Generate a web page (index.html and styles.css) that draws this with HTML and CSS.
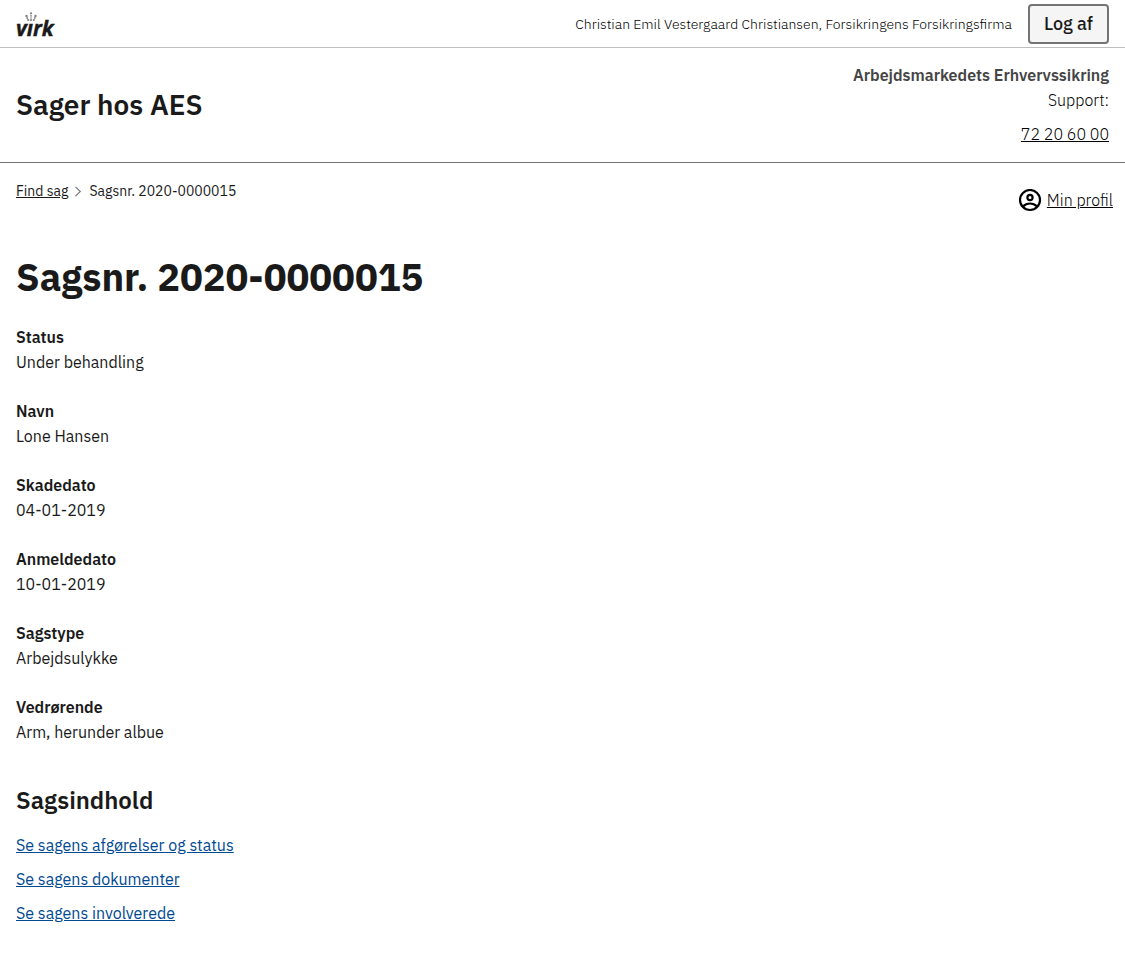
FILE: index.html
```html
<!DOCTYPE html>
<html lang="da">
<head>
<meta charset="utf-8">
<meta name="viewport" content="width=device-width, initial-scale=1">
<title>Sagsnr. 2020-0000015</title>
<link rel="stylesheet" href="styles.css">
</head>
<body>
<header>
  <div class="portal-bar">
    <a class="logo" href="#" aria-label="virk">
      <svg width="48" height="40" viewBox="0 0 48 40" aria-hidden="true">
        <g fill="#808080">
          <circle cx="15" cy="9.300" r="1.100"/><circle cx="15" cy="11.800" r=".9"/><circle cx="15" cy="14" r=".8"/><circle cx="15" cy="16" r="1.100"/>
          <circle cx="10.500" cy="12" r="1.200"/><circle cx="11.200" cy="14" r=".9"/><circle cx="12.200" cy="16" r="1.100"/>
          <circle cx="19.500" cy="12" r="1.200"/><circle cx="18.800" cy="14" r=".9"/><circle cx="17.800" cy="16" r="1.100"/>
        </g>
        <text class="logo-text" x="0" y="32">vırk</text>
      </svg>
    </a>
    <p class="user">Christian Emil Vestergaard Christiansen, Forsikringens Forsikringsfirma</p>
    <button class="logout" type="button">Log af</button>
  </div>
  <div class="solution-bar">
    <p class="solution-title">Sager hos AES</p>
    <div class="authority">
      <p class="authority-name">Arbejdsmarkedets Erhvervssikring</p>
      <p>Support:</p>
      <p class="phone"><a href="tel:72206000">72 20 60 00</a></p>
    </div>
  </div>
</header>
<div class="page-nav">
  <nav class="breadcrumbs" aria-label="Brødkrumme">
    <a href="#">Find sag</a>
    <svg width="7" height="11" viewBox="0 0 7 11" fill="none" stroke="#747474" stroke-width="1.100" aria-hidden="true"><path d="M.5 .8l4.800 4.700L.5 10.200"/></svg>
    <span>Sagsnr. 2020-0000015</span>
  </nav>
  <a class="profile" href="#">
    <svg width="24" height="24" viewBox="0 0 24 24" fill="none" stroke="#000" stroke-width="2.200" aria-hidden="true"><circle cx="12" cy="11" r="10"/><circle cx="12" cy="8.500" r="2.600"/><path d="M5 17.500c2-2 4.200-3 7-3s5 1 7 3"/></svg>
    <span>Min profil</span>
  </a>
</div>
<main>
  <h1>Sagsnr. 2020-0000015</h1>
  <dl class="facts">
    <div><dt>Status</dt><dd>Under behandling</dd></div>
    <div><dt>Navn</dt><dd>Lone Hansen</dd></div>
    <div><dt>Skadedato</dt><dd>04-01-2019</dd></div>
    <div><dt>Anmeldedato</dt><dd>10-01-2019</dd></div>
    <div><dt>Sagstype</dt><dd>Arbejdsulykke</dd></div>
    <div><dt>Vedrørende</dt><dd>Arm, herunder albue</dd></div>
  </dl>
  <h2>Sagsindhold</h2>
  <ul class="links">
    <li><a href="#">Se sagens afgørelser og status</a></li>
    <li><a href="#">Se sagens dokumenter</a></li>
    <li><a href="#">Se sagens involverede</a></li>
  </ul>
</main>
</body>
</html>
```
FILE: styles.css
```css
* { box-sizing: border-box; }
body {
  margin: 0;
  background: #fff;
  color: #1a1a1a;
  font: 400 16px/25px "IBM Plex Sans", "Noto Sans", sans-serif;
}
p, h1, h2, dl, dd, ul { margin: 0; }
a { color: inherit; text-underline-offset: 1px; }

.portal-bar {
  display: flex;
  align-items: center;
  gap: 16px;
  padding: 4px 16px 3px;
  border-bottom: 1px solid #bfbfbf;
}
.logo { display: flex; margin-right: auto; }
.logo svg { overflow: visible; }
.logo-text {
  font: italic 700 21px "Open Sans", sans-serif;
  fill: #1a1a1a;
  stroke: #1a1a1a;
  stroke-width: .4px;
}
.user { color: #000; font-size: 14px; line-height: 20px; font-weight: 300; }
.logout {
  height: 40px;
  padding: 0 14px;
  border: 2px solid #747474;
  border-radius: 4px;
  background: #f5f5f5;
  color: #1a1a1a;
  font: 500 18px/24px "IBM Plex Sans", "Noto Sans", sans-serif;
}

.solution-bar {
  display: flex;
  align-items: center;
  justify-content: space-between;
  padding: 15px 16px 11px;
  border-bottom: 1px solid #747474;
}
.solution-title { padding-bottom: 4px; font-size: 28px; line-height: 36px; font-weight: 600; }
.authority { color: #000; font-weight: 300; text-align: right; }
.authority-name { color: #454545; font-weight: 600; }
.phone { padding: 9px 0 4px; }

.page-nav {
  display: flex;
  justify-content: space-between;
  align-items: flex-start;
  padding: 18px 12px 0 16px;
}
.breadcrumbs {
  display: flex;
  align-items: center;
  gap: 7px;
  font-size: 14px;
  line-height: 20px;
}
.profile {
  display: flex;
  align-items: center;
  gap: 5px;
  padding-top: 7px;
  color: #000;
  font-weight: 300;
}

main { padding: 36px 16px 32px; }
h1 { font-size: 38px; line-height: 56px; font-weight: 700; }
.facts { display: grid; gap: 24px; margin-top: 20px; }
dt { font-weight: 600; }
h2 { margin-top: 39px; font-size: 24px; line-height: 32px; font-weight: 600; }
.links {
  display: grid;
  gap: 9px;
  margin-top: 17px;
  padding: 0;
  list-style: none;
  color: #004993;
}
```
